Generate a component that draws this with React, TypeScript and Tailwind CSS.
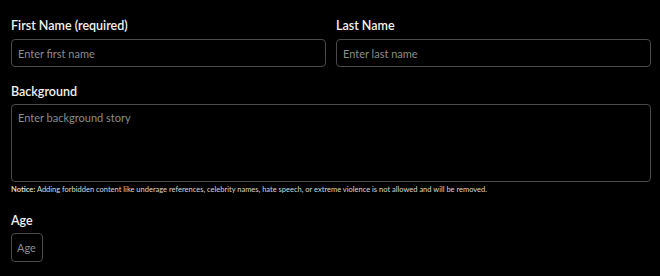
export default function App() {
  const font = { fontFamily: "Lato, 'Noto Sans', sans-serif" };
  return (
    <div className="min-h-[276px] w-[660px] bg-black pl-[11px] pr-[9px] pt-[17px] text-white" style={font}>
      <div className="grid grid-cols-2 gap-[10px]">
        <div>
          <label className="block text-[12.5px] font-semibold leading-[18px] text-[#f2f2f2]">First Name (required)</label>
          <input
            placeholder="Enter first name"
            className="mt-[4px] block h-[28px] w-full rounded-[4px] border border-[#4a4a4a] bg-black px-[6px] text-[11px] text-white outline-none placeholder:text-[#8c8c8c]"
          />
        </div>
        <div>
          <label className="block text-[12.5px] font-semibold leading-[18px] text-[#f2f2f2]">Last Name</label>
          <input
            placeholder="Enter last name"
            className="mt-[4px] block h-[28px] w-full rounded-[4px] border border-[#4a4a4a] bg-black px-[6px] text-[11px] text-white outline-none placeholder:text-[#8c8c8c]"
          />
        </div>
      </div>
      <label className="mt-[16px] block text-[12.5px] font-semibold leading-[18px] text-[#f2f2f2]">Background</label>
      <textarea
        placeholder="Enter background story"
        className="mt-[3px] block h-[78px] w-full resize-none rounded-[4px] border border-[#4a4a4a] bg-black px-[6px] py-[5px] text-[11px] text-white outline-none placeholder:text-[#8c8c8c]"
      />
      <p className="mt-[2px] text-[7.5px] leading-[12px] text-[#d9d9d9]">
        <span className="font-bold">Notice:</span> Adding forbidden content like underage references, celebrity names, hate speech, or extreme violence is not allowed and will be removed.
      </p>
      <label className="mt-[16px] block text-[12.5px] font-semibold leading-[18px] text-[#f2f2f2]">Age</label>
      <input
        placeholder="Age"
        className="mt-[3px] block h-[29px] w-[32px] rounded-[4px] border border-[#4a4a4a] bg-black px-[5px] text-[11px] text-white outline-none placeholder:text-[#8c8c8c]"
      />
    </div>
  );
}
